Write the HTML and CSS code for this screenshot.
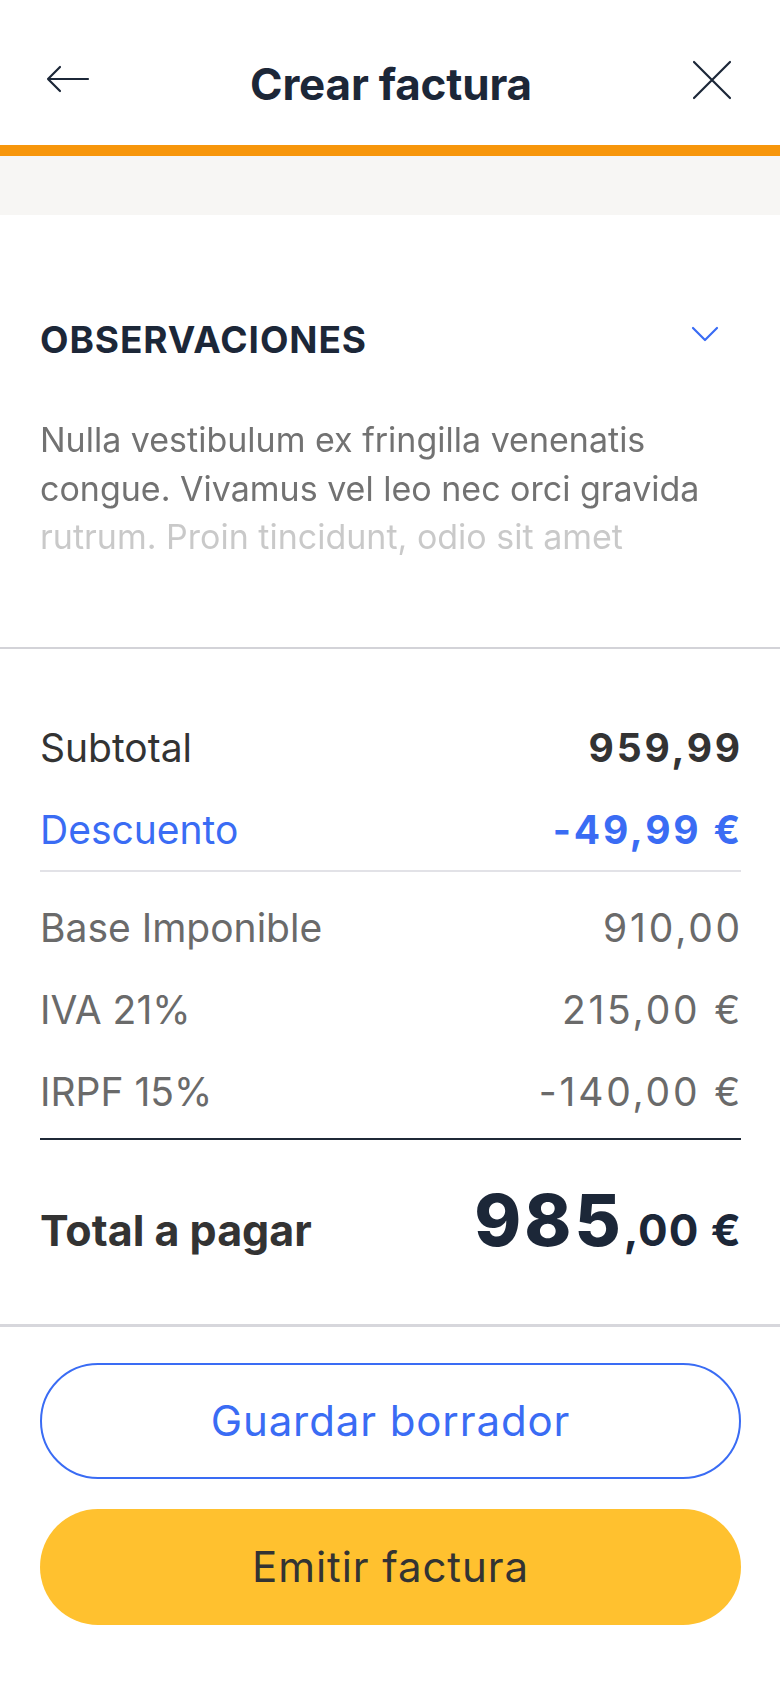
FILE: index.html
```html
<!DOCTYPE html>
<html lang="es">
<head>
<meta charset="utf-8">
<title>Crear factura</title>
<link rel="stylesheet" href="styles.css">
</head>
<body>
<div class="screen">
  <header class="topbar">
    <button class="icon-btn back" aria-label="Volver">
      <svg width="44" height="30" viewBox="0 0 44 30" fill="none" stroke="#1c2738" stroke-width="2.2" stroke-linecap="round" stroke-linejoin="round"><path d="M2 14h40M14 2L2 14l12 12"/></svg>
    </button>
    <h1 class="title">Crear factura</h1>
    <button class="icon-btn close" aria-label="Cerrar">
      <svg width="40" height="40" viewBox="0 0 40 40" fill="none" stroke="#1c2738" stroke-width="2.2" stroke-linecap="round"><path d="M2 2l36 36M38 2L2 38"/></svg>
    </button>
  </header>
  <div class="progress"></div>
  <div class="band"></div>

  <section class="notes">
    <div class="notes-head">
      <h2 class="notes-title">OBSERVACIONES</h2>
      <svg class="chevron" width="28" height="16" viewBox="0 0 28 16" fill="none" stroke="#3a6cf4" stroke-width="2.2" stroke-linecap="round" stroke-linejoin="round"><path d="M2 2l12 12L26 2"/></svg>
    </div>
    <p class="notes-text">Nulla vestibulum ex fringilla venenatis<br>congue. Vivamus vel leo nec orci gravida<br>rutrum. Proin tincidunt, odio sit amet</p>
  </section>

  <div class="rule"></div>

  <section class="totals">
    <div class="row strong"><span>Subtotal</span><span class="val">959,99</span></div>
    <div class="row discount"><span>Descuento</span><span class="val">-49,99 €</span></div>
    <div class="sep-light"></div>
    <div class="row muted"><span>Base Imponible</span><span class="val">910,00</span></div>
    <div class="row muted"><span>IVA 21%</span><span class="val">215,00 €</span></div>
    <div class="row muted"><span>IRPF 15%</span><span class="val">-140,00 €</span></div>
    <div class="sep-dark"></div>
    <div class="total-row">
      <span class="total-label">Total a pagar</span>
      <span class="total-amount"><span class="big">985</span><span class="small">,00 €</span></span>
    </div>
  </section>

  <div class="rule thick"></div>

  <footer class="actions">
    <button class="btn outline">Guardar borrador</button>
    <button class="btn primary">Emitir factura</button>
  </footer>
</div>
</body>
</html>
```

FILE: styles.css
```css
* { box-sizing: border-box; }
html, body { margin: 0; padding: 0; background: #ffffff; }
body {
  font-family: Inter, "Noto Sans", "Liberation Sans", sans-serif;
  color: #333333;
  width: 780px;
}
.screen { display: flex; flex-direction: column; }

.topbar {
  height: 145px;
  display: flex;
  align-items: center;
  justify-content: space-between;
  padding: 14px 48px 0 46px;
}
.icon-btn {
  background: none;
  border: none;
  padding: 0;
  display: flex;
  align-items: center;
  justify-content: center;
}
.title {
  margin: 8px 0 0;
  font-size: 44px;
  font-weight: 700;
  color: #1c2738;
  line-height: 52px;
  letter-spacing: -0.2px;
}

.progress { height: 11px; background: #f7960b; }
.band { height: 59px; background: #f7f6f4; }

.notes { padding: 103px 39px 85px 40px; }
.notes-head {
  display: flex;
  align-items: flex-start;
  justify-content: space-between;
}
.notes-title {
  margin: 0;
  font-size: 37px;
  line-height: 44px;
  font-weight: 700;
  color: #1c2738;
  letter-spacing: 0.9px;
}
.chevron { margin: 8px 22px 0 0; }
.notes-text {
  margin: 54px 0 0;
  font-size: 34px;
  line-height: 48.5px;
  color: #727272;
  -webkit-mask-image: linear-gradient(to bottom, #000 0, #000 66%, rgba(0,0,0,0.38) 72%, rgba(0,0,0,0.38) 100%);
  mask-image: linear-gradient(to bottom, #000 0, #000 66%, rgba(0,0,0,0.38) 72%, rgba(0,0,0,0.38) 100%);
}

.rule { height: 2px; background: #d3d3d8; }
.rule.thick { height: 3px; background: #d7d7dc; }

.totals { padding: 58px 39px 0 40px; display: flex; flex-direction: column; }
.row {
  display: flex;
  justify-content: space-between;
  font-size: 39px;
  line-height: 82px;
  color: #6a6a6a;
}
.row .val { letter-spacing: 2.8px; margin-right: -2px; white-space: nowrap; }
.row.strong { color: #333333; }
.row.strong .val { font-weight: 700; }
.row.discount { color: #3a6cf4; }
.row.discount .val { font-weight: 700; }
.sep-light { height: 2px; background: #e2e2e7; margin: -1px 0 15px; }
.sep-dark { height: 2px; background: #1f2937; margin-top: 5px; }

.total-row {
  display: flex;
  justify-content: space-between;
  align-items: baseline;
  padding: 40px 0 44px;
}
.total-label { font-size: 43px; font-weight: 700; color: #333333; white-space: nowrap; }
.total-amount { color: #1c2738; font-weight: 700; line-height: 80px; white-space: nowrap; }
.total-amount .big { font-size: 71px; font-weight: 800; letter-spacing: 3px; }
.total-amount .small { font-size: 44px; letter-spacing: 1px; margin-right: -1px; }

.actions {
  padding: 36px 39px 0 40px;
  display: flex;
  flex-direction: column;
  gap: 30px;
}
.btn {
  height: 116px;
  border-radius: 58px;
  font-family: inherit;
  font-size: 42px;
  letter-spacing: 0.9px;
  font-weight: 400;
  display: flex;
  align-items: center;
  justify-content: center;
}
.btn.outline {
  background: #ffffff;
  border: 2px solid #3a6cf4;
  color: #3a6cf4;
}
.btn.primary {
  background: #ffc12f;
  border: none;
  color: #333333;
}
```
